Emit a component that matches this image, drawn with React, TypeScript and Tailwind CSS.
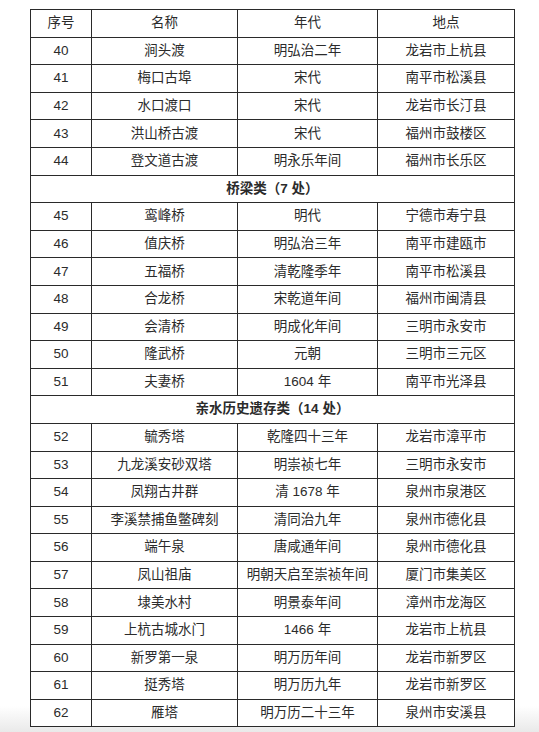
import React from "react";

type Row = { no: string; name: string; era: string; place: string };
type Item = Row | { section: string };

const items: Item[] = [
  { no: "40", name: "涧头渡", era: "明弘治二年", place: "龙岩市上杭县" },
  { no: "41", name: "梅口古埠", era: "宋代", place: "南平市松溪县" },
  { no: "42", name: "水口渡口", era: "宋代", place: "龙岩市长汀县" },
  { no: "43", name: "洪山桥古渡", era: "宋代", place: "福州市鼓楼区" },
  { no: "44", name: "登文道古渡", era: "明永乐年间", place: "福州市长乐区" },
  { section: "桥梁类（7 处）" },
  { no: "45", name: "鸾峰桥", era: "明代", place: "宁德市寿宁县" },
  { no: "46", name: "值庆桥", era: "明弘治三年", place: "南平市建瓯市" },
  { no: "47", name: "五福桥", era: "清乾隆季年", place: "南平市松溪县" },
  { no: "48", name: "合龙桥", era: "宋乾道年间", place: "福州市闽清县" },
  { no: "49", name: "会清桥", era: "明成化年间", place: "三明市永安市" },
  { no: "50", name: "隆武桥", era: "元朝", place: "三明市三元区" },
  { no: "51", name: "夫妻桥", era: "1604 年", place: "南平市光泽县" },
  { section: "亲水历史遗存类（14 处）" },
  { no: "52", name: "毓秀塔", era: "乾隆四十三年", place: "龙岩市漳平市" },
  { no: "53", name: "九龙溪安砂双塔", era: "明崇祯七年", place: "三明市永安市" },
  { no: "54", name: "凤翔古井群", era: "清 1678 年", place: "泉州市泉港区" },
  { no: "55", name: "李溪禁捕鱼鳖碑刻", era: "清同治九年", place: "泉州市德化县" },
  { no: "56", name: "端午泉", era: "唐咸通年间", place: "泉州市德化县" },
  { no: "57", name: "凤山祖庙", era: "明朝天启至崇祯年间", place: "厦门市集美区" },
  { no: "58", name: "埭美水村", era: "明景泰年间", place: "漳州市龙海区" },
  { no: "59", name: "上杭古城水门", era: "1466 年", place: "龙岩市上杭县" },
  { no: "60", name: "新罗第一泉", era: "明万历年间", place: "龙岩市新罗区" },
  { no: "61", name: "挺秀塔", era: "明万历九年", place: "龙岩市新罗区" },
  { no: "62", name: "雁塔", era: "明万历二十三年", place: "泉州市安溪县" },
];

const cell = "border border-[#2a2a2a] text-center align-middle p-0";

export default function App() {
  return (
    <div
      className="min-h-[732px] w-full pt-[9px] bg-[linear-gradient(to_bottom,#ffffff_706px,#e9e9e9_732px)]"
      style={{ fontFamily: '"Liberation Sans", "Noto Sans CJK SC", sans-serif' }}
    >
      <table className="ml-[30px] w-[484px] table-fixed border-collapse bg-white text-[13.5px] text-[#2b2b2b]">
        <colgroup>
          <col className="w-[61px]" />
          <col className="w-[146px]" />
          <col className="w-[140px]" />
          <col className="w-[137px]" />
        </colgroup>
        <thead>
          <tr className="h-[27.6px]">
            <th className={`${cell} font-normal`}>序号</th>
            <th className={`${cell} font-normal`}>名称</th>
            <th className={`${cell} font-normal`}>年代</th>
            <th className={`${cell} font-normal`}>地点</th>
          </tr>
        </thead>
        <tbody>
          {items.map((it, i) =>
            "section" in it ? (
              <tr key={i} className="h-[27.6px]">
                <td colSpan={4} className={`${cell} font-bold`}>
                  {it.section}
                </td>
              </tr>
            ) : (
              <tr key={i} className="h-[27.6px]">
                <td className={cell}>{it.no}</td>
                <td className={cell}>{it.name}</td>
                <td className={cell}>{it.era}</td>
                <td className={cell}>{it.place}</td>
              </tr>
            )
          )}
        </tbody>
      </table>
    </div>
  );
}
